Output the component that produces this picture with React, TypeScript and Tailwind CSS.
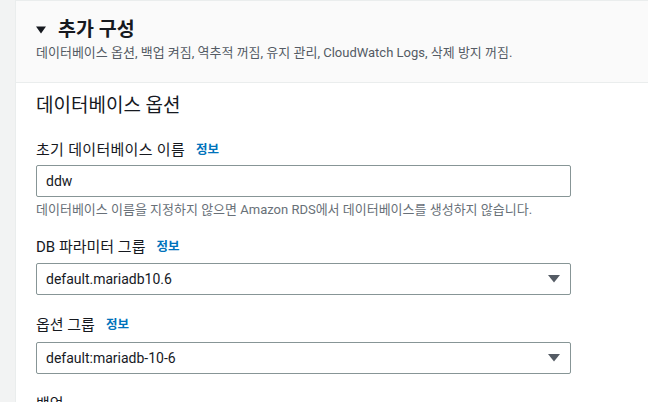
import React from 'react'

const font = { fontFamily: '"Roboto", "Noto Sans CJK KR", sans-serif' }

function InfoLink() {
  return <span className="ml-[11px] text-[12.5px] font-bold tracking-normal text-[#0073bb]">정보</span>
}

function SelectBox({ value }: { value: string }) {
  return (
    <div className="flex h-[32px] w-[535px] items-center justify-between rounded-[2px] border border-[#879596] bg-white pl-[9px] pr-[10px] text-[14px] text-[#16191f]">
      <span>{value}</span>
      <svg width="12" height="8" viewBox="0 0 12 8">
        <path d="M0 0 H12 L6 7.5 Z" fill="#545b64" />
      </svg>
    </div>
  )
}

export default function App() {
  return (
    <div className="flex h-[402px] w-[648px] overflow-hidden bg-[#f2f3f3]" style={font}>
      <div className="w-[15px] shrink-0" />
      <div className="flex-1 border-l border-t border-[#eaeded] bg-white">
        <div className="h-[82px] border-b border-[#eaeded] bg-[#fafafa] pl-[20px] pt-[18px]">
          <div className="flex items-center leading-[22px]">
            <svg width="10" height="8" viewBox="0 0 10 8" className="mr-[12px]">
              <path d="M0 0.5 H10 L5 7.5 Z" fill="#16191f" />
            </svg>
            <span className="text-[19.5px] font-bold text-[#16191f]">추가 구성</span>
          </div>
          <div className="mt-[4px] text-[13px] leading-[16px] text-[#545b64]">
            데이터베이스 옵션, 백업 켜짐, 역추적 꺼짐, 유지 관리, CloudWatch Logs, 삭제 방지 꺼짐.
          </div>
        </div>

        <div className="pl-[20px] pt-[11px]">
          <h2 className="text-[19px] leading-[24px] text-[#16191f]">데이터베이스 옵션</h2>

          <div className="mt-[22px] flex items-center text-[15px] leading-[20px] tracking-[0.3px] text-[#16191f]">
            초기 데이터베이스 이름
            <InfoLink />
          </div>
          <div className="mt-[5px] flex h-[32px] w-[535px] items-center rounded-[2px] border border-[#879596] pl-[9px] text-[14px] text-[#16191f]">
            ddw
          </div>
          <div className="mt-[5px] text-[13px] leading-[16px] text-[#687078]">
            데이터베이스 이름을 지정하지 않으면 Amazon RDS에서 데이터베이스를 생성하지 않습니다.
          </div>

          <div className="mt-[19px] flex items-center text-[15px] leading-[20px] text-[#16191f]">
            DB 파라미터 그룹
            <InfoLink />
          </div>
          <div className="mt-[6px]">
            <SelectBox value="default.mariadb10.6" />
          </div>

          <div className="mt-[20px] flex items-center text-[15px] leading-[20px] text-[#16191f]">
            옵션 그룹
            <InfoLink />
          </div>
          <div className="mt-[7px]">
            <SelectBox value="default:mariadb-10-6" />
          </div>

          <div className="mt-[20px] text-[15px] leading-[20px] text-[#16191f]">백업</div>
        </div>
      </div>
    </div>
  )
}
